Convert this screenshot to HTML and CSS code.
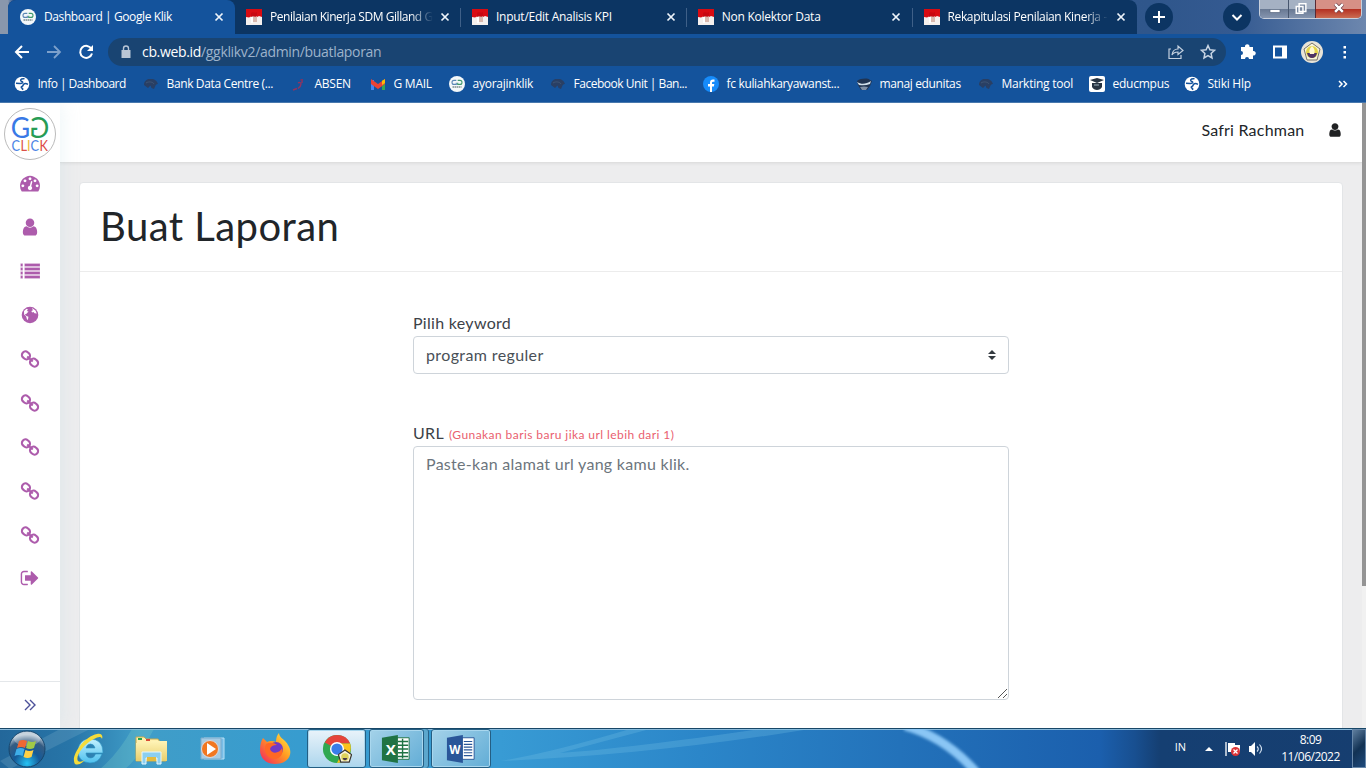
FILE: index.html
```html
<!DOCTYPE html>
<html lang="id">
<head>
<meta charset="utf-8">
<title>Dashboard | Google Klik</title>
<link rel="stylesheet" href="styles.css">
</head>
<body>
<svg class="defs" width="0" height="0">
  <defs>
    <symbol id="gg" viewBox="0 0 16 16"><circle cx="8" cy="8" r="8" fill="#f4f8fa"/><path d="M7.300 4.400H5a2 2 0 0 0 0 4h2.300V6.700" fill="none" stroke="#5b86b5" stroke-width="1.100"/><path d="M8.700 4.400H11a2 2 0 0 1 0 4H8.700V6.700" fill="none" stroke="#3f9a6c" stroke-width="1.100"/><path d="M3.500 11h9" stroke="#99a6a8" stroke-width="2" stroke-dasharray="1.500 .5"/></symbol>
    <symbol id="flag" viewBox="0 0 16 16"><path d="M0 0h16v16H0z" fill="#f5f0ee"/><path d="M0 0h16v8l-3-1-3 1.500L6 7 3 8.500 0 8z" fill="#d90b12"/><path d="M5 5h6v8H5z" fill="#d8b8ae"/><path d="M5 4c2-2 4 1 6-1v4c-2 2-4-1-6 1z" fill="#c80710"/><path d="M5 8h2v6H5z" fill="#fff"/></symbol>
    <symbol id="close" viewBox="0 0 16 16"><path d="M4.500 4.500l7 7m0-7l-7 7" stroke="#eef4fb" stroke-width="1.700"/></symbol>
    <symbol id="world" viewBox="0 0 16 16"><circle cx="8" cy="8" r="7.300" fill="#fff"/><path d="M10.500 2.800c-2.500-.3-4 .3-3.800 1.700.2 1.200 2.300.7 2 2-.3 1-1.700 1-2.700.9L2 7.300" fill="none" stroke="#14539c" stroke-width="1.500"/><path d="M14 8.400c-1.500-1-3.300-1.200-4.300-.3-.9.900-.3 1.800-1.500 2.200-1.500.4-1 1.700 0 1.900.8.200.4 1 .2 1.800" fill="none" stroke="#14539c" stroke-width="1.500"/></symbol>
    <symbol id="bird" viewBox="0 0 16 16"><path d="M1 9C1 4 5 2.500 8 3c4 0 6 2 7 5-1 0-2 .5-2.500 1.500L11 13 8.500 12 7.500 9.500 5 12z" fill="#293f64"/><path d="M3 7c3-2 7-1 8 1" stroke="#405676" fill="none"/></symbol>
    <symbol id="user" viewBox="0 0 1792 1792"><path d="M1536 1399q0 109-62.500 187t-150.500 78h-854q-88 0-150.500-78t-62.500-187q0-85 8.500-160.500t31.500-152 58.500-131 94-89 134.500-34.500q131 128 313 128t313-128q76 0 134.500 34.500t94 89 58.500 131 31.500 152 8.500 160.500zm-256-887q0 159-112.500 271.500t-271.500 112.500-271.500-112.500-112.500-271.500 112.500-271.500 271.500-112.500 271.500 112.500 112.500 271.500z"/></symbol>
    <symbol id="link" viewBox="0 0 20 20"><g fill="none" stroke="currentColor" stroke-width="2.100" transform="rotate(42 10 10)"><rect x=".4" y="6.500" width="8.300" height="7" rx="3.300"/><rect x="11.300" y="6.500" width="8.300" height="7" rx="3.300"/><path d="M6.300 10h7.400"/></g></symbol>
    <radialGradient id="orb" cx=".5" cy=".9" r=".8"><stop offset="0" stop-color="#25c3f4"/><stop offset=".45" stop-color="#155a98"/><stop offset=".8" stop-color="#355c82"/><stop offset="1" stop-color="#b1c3d2"/></radialGradient>
    <linearGradient id="ie" x2="0" y2="1"><stop stop-color="#c4f1ff"/><stop offset="1" stop-color="#4cc0ee"/></linearGradient>
    <linearGradient id="fox" x1="1" y1="0" x2="0" y2="1"><stop stop-color="#fff04b"/><stop offset=".45" stop-color="#ff9a22"/><stop offset="1" stop-color="#f31c63"/></linearGradient>
    <linearGradient id="sheet" x2="0" y2="1"><stop stop-color="#fff4b7"/><stop offset="1" stop-color="#e9ce6c"/></linearGradient>
  </defs>
</svg>

<div class="screen">
  <header class="browser">
    <div class="tabstrip">
      <div class="tabs">
        <div class="tab active"><svg class="fav"><use href="#gg"/></svg><span class="tab-name">Dashboard | Google Klik</span><svg class="fav"><use href="#close"/></svg></div>
        <div class="tab fade t2"><svg class="fav"><use href="#flag"/></svg><span class="tab-name">Penilaian Kinerja SDM Gilland G</span><svg class="fav"><use href="#close"/></svg></div>
        <div class="tab t3"><svg class="fav"><use href="#flag"/></svg><span class="tab-name">Input/Edit Analisis KPI</span><svg class="fav"><use href="#close"/></svg></div>
        <div class="tab t4"><svg class="fav"><use href="#flag"/></svg><span class="tab-name">Non Kolektor Data</span><svg class="fav"><use href="#close"/></svg></div>
        <div class="tab fade t5"><svg class="fav"><use href="#flag"/></svg><span class="tab-name">Rekapitulasi Penilaian Kinerja -</span><svg class="fav"><use href="#close"/></svg></div>
      </div>
      <svg class="round plus" viewBox="0 0 28 28"><path d="M14 8v12M8 14h12" stroke="#fff" stroke-width="2"/></svg>
      <svg class="round down" viewBox="0 0 28 28"><path d="M9.500 12l4.500 4.500 4.500-4.500" fill="none" stroke="#fff" stroke-width="2"/></svg>
      <div class="winbuttons">
        <svg class="min" viewBox="0 0 28 18"><path d="M10 9.500h10v3H10z" fill="#fff" stroke="#57677f" stroke-width=".7"/></svg>
        <svg class="max" viewBox="0 0 27 18"><path d="M10.500 3.500h7v8h-7zM7.500 6.500h7v7h-7z" fill="#7888a1" stroke="#fff" stroke-width="1.500"/></svg>
        <svg class="exit" viewBox="0 0 47 18"><path d="M20 4l8 8m0-8l-8 8" stroke="#704048" stroke-width="4"/><path d="M20 4l8 8m0-8l-8 8" stroke="#fff" stroke-width="2.500"/></svg>
      </div>
    </div>
    <div class="toolbar">
      <svg class="tool" viewBox="0 0 20 20"><path d="M17 10H4m6-6l-6 6 6 6" fill="none" stroke="#fff" stroke-width="2"/></svg>
      <svg class="tool" viewBox="0 0 20 20"><path d="M3 10h13m-6-6l6 6-6 6" fill="none" stroke="#7da0cb" stroke-width="1.800"/></svg>
      <svg class="tool" viewBox="0 0 20 20"><path d="M15.500 7A6 6 0 1 0 16 11.500" fill="none" stroke="#fff" stroke-width="2"/><path d="M17 3v6h-6z" fill="#fff"/></svg>
      <div class="omnibox">
        <svg class="lock" viewBox="0 0 12 16"><path d="M1.500 6h9v8h-9z" fill="#b9c6d6"/><path d="M3.500 7V4.500a2.500 2.500 0 0 1 5 0V7" fill="none" stroke="#b9c6d6" stroke-width="1.400"/></svg>
        <span class="url"><b>cb.web.id</b>/ggklikv2/admin/buatlaporan</span>
        <svg class="tool share" viewBox="0 0 20 20"><path d="M5 7H3v9.500h12V13M6 13c.5-4 3-6 6-6V4l5 4.500-5 4V10c-3 0-4.500.5-6 3z" fill="none" stroke="#c3d0df" stroke-width="1.200"/></svg>
        <svg class="tool" viewBox="0 0 20 20"><path d="M10 3.500l1.900 4.300 4.600.5-3.400 3.100.9 4.600-4-2.300L6 16l.9-4.600-3.400-3.100 4.600-.5z" fill="none" stroke="#c8d5e4" stroke-width="1.500"/></svg>
      </div>
      <svg class="tool ext" viewBox="0 0 20 20"><path d="M3 5h4a2.300 2.300 0 1 1 4.500 0H15v4a2.300 2.300 0 1 1 0 4.500V17h-4a2 2 0 1 0-4 0H3v-4a2 2 0 1 0 0-4z" fill="#fff"/></svg>
      <svg class="tool panel" viewBox="0 0 20 20"><path d="M4 4.500h12v11H4z" fill="none" stroke="#fff" stroke-width="2"/><path d="M12 4h5v12h-5z" fill="#fff"/></svg>
      <svg class="avatar" viewBox="0 0 22 22"><circle cx="11" cy="11" r="11" fill="#e9e4d8"/><path d="M11 2l8 6-3 11H6L3 8z" fill="#f8f4d7" stroke="#77736c"/><circle cx="11" cy="11" r="6" fill="#e5d449"/><path d="M6 12h10q-1 5-5 5t-5-5z" fill="#4e3265"/><path d="M11 5q4 4 2 8H9q-2-4 2-8z" fill="#fff8d0"/></svg>
      <svg class="tool dots" viewBox="0 0 20 20"><path d="M8.500 4H11v2.500H8.500zm0 5H11v2.500H8.500zm0 5H11v2.500H8.500z" fill="#fff"/></svg>
    </div>
    <nav class="bookmarks">
      <span class="bm b1"><svg class="fav"><use href="#world"/></svg>Info | Dashboard</span>
      <span class="bm b2"><svg class="fav"><use href="#bird"/></svg>Bank Data Centre (...</span>
      <span class="bm b3"><svg class="fav" viewBox="0 0 16 16"><path d="M7 7c1.500-1 3-.5 3 1s-1 3-3 4.500M11 3v4M2 14l4-1.500" fill="none" stroke="#93345f" stroke-width="1.400"/><path d="M9 4h3" stroke="#7f315e"/></svg>ABSEN</span>
      <span class="bm b4"><svg class="fav" viewBox="0 0 16 16"><path d="M1 4h3v10H1z" fill="#4285f4"/><path d="M12 4h3v10h-3z" fill="#34a853"/><path d="M1 3l7 5 7-5v5l-7 5-7-5z" fill="#ea4335"/><path d="M12 5l3-2v4l-3 2z" fill="#fbbc04"/></svg>G MAIL</span>
      <span class="bm b5"><svg class="fav"><use href="#gg"/></svg>ayorajinklik</span>
      <span class="bm b6"><svg class="fav"><use href="#bird"/></svg>Facebook Unit | Ban...</span>
      <span class="bm b7"><svg class="fav" viewBox="0 0 16 16"><circle cx="8" cy="8" r="8" fill="#168bfa"/><path d="M7 16v-5.500H5V8h2V6.500Q7 3.500 10 3.500h1.500v2.200H10q-1 0-1 1V8h2.300l-.4 2.500H9V16z" fill="#fff"/></svg>fc kuliahkaryawanst...</span>
      <span class="bm b8"><svg class="fav" viewBox="0 0 16 16"><path d="M1 5c4-3 11-3 13-1l2 1-2 5-3 4H5L2 9z" fill="#203452"/><path d="M1 6c5 3 9 2 14-1l-1 3q-5 2-11 1z" fill="#d0dfeb"/><path d="M4 11q4-1 8 0l-2 3H6z" fill="#7e8fa6"/></svg>manaj edunitas</span>
      <span class="bm b9"><svg class="fav"><use href="#bird"/></svg>Markting tool</span>
      <span class="bm b10"><svg class="fav" viewBox="0 0 16 16"><rect width="16" height="16" rx="2" fill="#fff"/><path d="M1 4l7-2 7 2-7 3zM3 7h10v4c-2 4-8 4-10 0z" fill="#263342"/><path d="M5 9h5" stroke="#a0b3bd"/></svg>educmpus</span>
      <span class="bm b11"><svg class="fav"><use href="#world"/></svg>Stiki Hlp</span>
      <span class="more"><svg viewBox="0 0 10 10"><path d="M1 2l3 3-3 3M5.500 2l3 3-3 3" fill="none" stroke="#fff" stroke-width="1.500"/></svg></span>
    </nav>
  </header>

  <div class="page">
    <aside class="sidebar">
      <svg class="logo" viewBox="0 0 52 52"><circle cx="26" cy="26" r="25.500" fill="#fff" stroke="#bbb"/>
        <g class="mono"><text transform="translate(6.800 29.700) scale(.95 1)" fill="#3979e6">G</text><text transform="translate(45.200 29.700) scale(-.95 1)" fill="#279c55">G</text></g>
        <g class="click"><text transform="translate(7.500 42.700) scale(.88 1)" fill="#4c83e5">C</text><text transform="translate(16.500 42.700) scale(.88 1)" fill="#db5049">L</text><text transform="translate(23 42.700) scale(.88 1)" fill="#ecba35">I</text><text transform="translate(26.500 42.700) scale(.88 1)" fill="#4c83e5">C</text><text transform="translate(35.500 42.700) scale(.88 1)" fill="#dc4a45">K</text></g></svg>
      <ul class="menu">
        <li><svg viewBox="0 0 1792 1792"><path d="M384 1152q0-53-37.500-90.500t-90.500-37.500-90.500 37.500-37.500 90.500 37.500 90.500 90.500 37.500 90.500-37.500 37.500-90.500zm192-448q0-53-37.500-90.500t-90.500-37.500-90.500 37.500-37.500 90.500 37.500 90.500 90.500 37.500 90.500-37.500 37.500-90.500zm428 481l101-382q6-26-7.500-48.500t-38.500-29.500-48 6.500-30 39.500l-101 382q-60 5-107 43.500t-63 98.500q-20 77 20 146t117 89 146-20 89-117q16-60-6-117t-72-91zm660-33q0-53-37.500-90.500t-90.500-37.500-90.500 37.500-37.500 90.500 37.500 90.500 90.500 37.500 90.500-37.500 37.500-90.500zm-640-640q0-53-37.500-90.500t-90.500-37.500-90.500 37.500-37.500 90.500 37.500 90.500 90.500 37.500 90.500-37.500 37.500-90.500zm448 192q0-53-37.500-90.500t-90.500-37.500-90.500 37.500-37.500 90.500 37.500 90.500 90.500 37.500 90.500-37.500 37.500-90.500zm320 448q0 261-141 483-19 29-54 29h-1402q-35 0-54-29-141-221-141-483 0-182 71-348t191-286 286-191 348-71 348 71 286 191 191 286 71 348z"/></svg></li>
        <li><svg><use href="#user"/></svg></li>
        <li><svg viewBox="0 0 20 20"><path d="M.5 2.500h2.300v3H.5zm4 0H20v3H4.500zm-4 4h2.300v3H.5zm4 0H20v3H4.500zm-4 4h2.300v3H.5zm4 0H20v3H4.500zm-4 4h2.300v3H.5zm4 0H20v3H4.500z" stroke="#fff" stroke-width=".2"/></svg></li>
        <li><svg viewBox="0 0 20 20"><circle cx="10" cy="10" r="8.300"/><path d="M4 6l2.500-2.300L8 4.500 6.800 6l1.700.4-2 2.400-1.700.7 1.300 1.300 2.300 1-.5 3.200-1-.8-.7-2.600-2.100-2zM12 3l3.500 2.500 1.300 3-2.300-.2-1-1.300-1.500.5-.6-1.500 1.500-.7z" fill="#fff"/></svg></li>
        <li><svg><use href="#link"/></svg></li><li><svg><use href="#link"/></svg></li><li><svg><use href="#link"/></svg></li><li><svg><use href="#link"/></svg></li><li><svg><use href="#link"/></svg></li>
        <li><svg viewBox="0 0 1792 1792"><path d="M704 1440q0 4 1 20t.5 26.500-3 23.500-10 19.500-20.500 6.500h-320q-119 0-203.500-84.500t-84.500-203.500v-704q0-119 84.500-203.500t203.500-84.500h320q13 0 22.500 9.500t9.500 22.500q0 4 1 20t.5 26.500-3 23.500-10 19.500-20.500 6.500h-320q-66 0-113 47t-47 113v704q0 66 47 113t113 47h312l11.500 1 11.500 3 8 5.500 7 9 2 13.500zm928-544q0 26-19 45l-544 544q-19 19-45 19t-45-19-19-45v-288h-448q-26 0-45-19t-19-45v-384q0-26 19-45t45-19h448v-288q0-26 19-45t45-19 45 19l544 544q19 19 19 45z"/></svg></li>
      </ul>
      <div class="expand"><svg viewBox="0 0 12 12"><path d="M1 1l5 5-5 5M6 1l5 5-5 5" fill="none" stroke="#4b5099" stroke-width="1.400"/></svg></div>
    </aside>
    <main class="content">
      <div class="topbar"><span class="username">Safri Rachman</span><svg class="usericon"><use href="#user"/></svg></div>
      <section class="card">
        <div class="card-head"><h1>Buat Laporan</h1></div>
        <form class="form">
          <label class="label-key">Pilih keyword</label>
          <div class="select"><span>program reguler</span><svg viewBox="0 0 8 10"><path d="M4 0l4 4H0zm0 10l4-4H0z" fill="#343a40"/></svg></div>
          <label class="label-url">URL <small>(Gunakan baris baru jika url lebih dari 1)</small></label>
          <div class="area"><span>Paste-kan alamat url yang kamu klik.</span><svg viewBox="0 0 9 9"><path d="M0 9l9-9M5 9l4-4" stroke="#555" stroke-width="1"/></svg></div>
        </form>
      </section>
    </main>
    <div class="scroll"><div class="thumb"></div></div>
  </div>

  <footer class="taskbar">
    <svg class="glow" viewBox="0 0 1366 40" preserveAspectRatio="none"><path d="M100 40q18-15 32-40h22q-16 30-29 40z" fill="#82d9cb" opacity=".25"/><path d="M0 32L60 0h30L10 40z" fill="#9cc5d9" opacity=".2"/><path d="M500 32q50-8 130-32h20q-60 16-90 24 70-5 200-24h50q-160 26-310 32z" fill="#76c1e5" opacity=".28"/><path class="streak" d="M905-3q40 11 71 46" fill="none" stroke="#8ac6f5" stroke-width="9"/></svg>
    <div class="launch">
      <svg class="start" viewBox="0 0 38 38"><circle cx="19" cy="19" r="18" fill="url(#orb)" stroke="#16466d"/><ellipse cx="19" cy="9" rx="13" ry="7" fill="#fff" opacity=".28"/><path d="M11 11q4-2 8 0l-2 7q-4-2-8 0z" fill="#ee6833"/><path d="M20 11q4 2 8 0l-2 7q-4 2-8 0z" fill="#a1c947"/><path d="M8.500 19q4-2 8 0l-2 7q-4-2-8 0z" fill="#3faee9"/><path d="M17.500 20q4 2 8 0l-2 7q-4 2-8 0z" fill="#ffd146"/></svg>
      <svg class="app ie" viewBox="0 0 32 32"><path d="M29 21q-3 9-12 9-12-1-12-12Q6 6 17 6q13 0 13 14H13q0 5 5 5 3 0 4.500-4zM13 15h9q-1-4-4.500-4T13 15z" fill="url(#ie)" stroke="#2a93c5" stroke-width=".6"/><path d="M2 31C-3 24 10 4 24 1c5-1 6 2 5 5-1-3-4-2-8 0C10 11 2 24 5 28q2 2 7-1-6 6-10 4z" fill="#f5dc3b"/></svg>
      <svg class="app files" viewBox="0 0 32 32"><path d="M1 4h8l2 2h12l2 3h6v19H1z" fill="#fff0af" stroke="#c7a94c"/><path d="M3 5h4v2H3z" fill="#28a54c"/><path d="M11 6h4v2h-4z" fill="#d94a35"/><path d="M19 8h4v2h-4z" fill="#3ea0e0"/><path d="M1 10h14l2-2h15v20H1z" fill="url(#sheet)"/><path d="M7 31V19h19v12h-4v-6H11v6z" fill="#8bcff0" stroke="#e4f6ff"/><path d="M12 24h9v4h-9z" fill="#e4bb3e"/></svg>
      <svg class="app wmp" viewBox="0 0 32 32"><path d="M8 5h20v21H8z" fill="#78bde7" stroke="#b7e1f7"/><path d="M5 5h20v21H5z" fill="#a5cbe4" stroke="#7caccc"/><circle cx="14" cy="16" r="8.500" fill="#f17721" stroke="#d9d9df"/><path d="M11 10l9 6-9 6z" fill="#fff"/></svg>
      <svg class="app firefox" viewBox="0 0 32 32"><path d="M16 31C7 31 1 25 1 17 1 12 2 8 4 5l4 4q4-2 9 0c0-4 1-7 3-9 0 5 7 7 9 12 6 9 0 19-13 19z" fill="url(#fox)"/><circle cx="17" cy="16" r="7" fill="#713bc7"/><path d="M7 11q6-3 11 1-6 0-7 4c2 6 10 4 12-1 2 6-2 11-8 11-7-1-11-8-8-15z" fill="#ff6825"/></svg>
    </div>
    <div class="task chrome"><svg class="app" viewBox="0 0 32 32"><circle cx="16" cy="16" r="15" fill="#30a851"/><path d="M16 16L3 9Q7 1 16 1q10 0 14 9H16z" fill="#e5443a"/><path d="M16 10h14c3 10-4 21-14 21l6-12z" fill="#fbc31c"/><circle cx="16" cy="16" r="7.500" fill="#fff"/><circle cx="16" cy="16" r="6" fill="#397de8"/><path d="M24.500 17l7 5-2.500 8h-9l-2.500-8z" fill="#f8f3d6" stroke="#393631" stroke-width="1.300"/><circle cx="24.500" cy="24.500" r="4" fill="#ded25b"/><path d="M22 25.500h5q-.5 2.500-2.500 2.500T22 25.500z" fill="#493a47"/></svg></div>
    <div class="task excel"><svg class="app" viewBox="0 0 32 32"><path d="M17 4h13v23H17z" fill="#fff" stroke="#207344"/><path d="M18 8h11M18 12h11M18 16h11M18 20h11M18 24h11M23 5v21" stroke="#207344" stroke-width="1.500"/><path d="M1 4l17-3v30L1 28z" fill="#207344"/><text x="5" y="22" font-family="Open Sans" font-weight="700" font-size="16" fill="#fff">X</text></svg></div>
    <div class="task word"><svg class="app" viewBox="0 0 32 32"><path d="M17 4h13v23H17z" fill="#fff" stroke="#2a5699"/><path d="M19 8h9M19 11h9M19 14h9M19 17h9M19 20h9M19 23h9" stroke="#2a5699" stroke-width="1.300"/><path d="M1 4l17-3v30L1 28z" fill="#2a5699"/><text x="3.500" y="21" font-family="Open Sans" font-weight="700" font-size="14" fill="#fff" textLength="12" lengthAdjust="spacingAndGlyphs">W</text></svg></div>
    <div class="tray">
      <span class="lang">IN</span>
      <svg class="up" viewBox="0 0 8 4"><path d="M0 4l4-4 4 4z" fill="#fff"/></svg>
      <svg class="tray-flag" viewBox="0 0 16 16"><path d="M1 1v14" stroke="#fff" stroke-width="1.300"/><path d="M3 2h7v2h5v7H3z" fill="#fff"/><circle cx="10.500" cy="10.500" r="4.500" fill="#dd3437"/><path d="M8.500 8.500l4 4m0-4l-4 4" stroke="#fff" stroke-width="1.300"/></svg>
      <svg class="sound" viewBox="0 0 16 16"><path d="M1 5h2l4-4v14l-4-4H1z" fill="#fff"/><path d="M9 5.500q2.500 2.500 0 5M11.500 3.500q4 4.500 0 9" fill="none" stroke="#d9e7f5" stroke-width="1.100"/></svg>
      <div class="clock"><span>8:09</span><span class="date">11/06/2022</span></div>
      <span class="peek"></span>
    </div>
  </footer>
</div>
</body>
</html>
```
FILE: styles.css
```css
* { box-sizing: border-box; }
body { margin: 0; overflow: hidden; font-family: Lato, "Open Sans", sans-serif; }
svg { display: block; flex: none; }
.defs { position: absolute; }
.screen { display: flex; flex-direction: column; width: 1366px; height: 768px; overflow: hidden; }

.browser { height: 103px; flex: none; background: #14539c; border-bottom: 1px solid #4878ad; font: 12px/16px "Open Sans", sans-serif; color: #fff; }
.tabstrip { display: flex; height: 34px; background: linear-gradient(90deg, #8997ac 0, #8997ac 8px, #3f649a 12px, #2f568b 1150px, #345a91 1235px, #6d87ae 1366px); }
.tabs { display: flex; width: 1129px; margin-left: 8px; background: #0c3563; border-radius: 8px 8px 0 0; }
.tab { display: flex; align-items: center; width: 225.750px; flex: none; padding: 0 7px 0 12px; height: 34px; }
.tab.active { background: #14539c; border-radius: 8px 8px 0 0; width: 227px; padding-right: 8px; }
.tab.t2 { width: 225px; padding-left: 11px; }
.tab.t3, .tab.t4, .tab.t5 { background: linear-gradient(#3f6088, #3f6088) 0 8px / 1px 19px no-repeat; }
.tab.t4, .tab.t5 { padding-right: 8px; }
.tab-name { flex: 1; margin: 0 5px 0 8px; overflow: hidden; white-space: nowrap; letter-spacing: -.26px; }
.active .tab-name { letter-spacing: -.4px; }
.t2 .tab-name { letter-spacing: -.45px; margin-right: 4px; }
.t5 .tab-name { letter-spacing: -.36px; }
.fade .tab-name { -webkit-mask-image: linear-gradient(90deg, #000 86%, transparent); mask-image: linear-gradient(90deg, #000 86%, transparent); }
.fav { width: 16px; height: 16px; }
.round { width: 28px; height: 28px; border-radius: 14px; background: #0c3563; margin-top: 3px; }
.plus { margin-left: 8px; }
.down { margin-left: 50px; }
.winbuttons { display: flex; width: 103px; height: 19px; margin-left: 8px; border: 1px solid #c9d0dc; border-top: 0; border-radius: 0 0 5px 5px; overflow: hidden; }
.winbuttons svg { height: 18px; }
.min { width: 28px; background: linear-gradient(#a5b1c3 50%, #687892 50%, #8595af); }
.max { width: 27px; border-left: 1px solid #47566e; background: linear-gradient(#a5b1c3 50%, #687892 50%, #8595af); }
.exit { width: 46px; border-left: 1px solid #582a34; background: linear-gradient(#d69086 50%, #b32f21 50%, #cb6c52); }
.toolbar { display: flex; align-items: center; height: 36px; padding-left: 12px; }
.tool { width: 20px; height: 20px; margin-right: 12px; }
.omnibox { display: flex; align-items: center; width: 1118px; height: 28px; border-radius: 14px; background: #194472; padding-left: 12px; margin-right: 12px; }
.omnibox .tool { margin-right: 8px; }
.omnibox .share { margin-right: 12px; }
.tool.panel { margin-right: 11px; }
.lock { width: 12px; height: 16px; margin-right: 10px; }
.url { flex: 1; color: #9db3cb; font-size: 14px; letter-spacing: -.33px; }
.url b { color: #fff; font-weight: 400; }
.avatar { width: 22px; height: 22px; margin-right: 12px; }
.dots { margin-right: 0; }
.bookmarks { display: grid; grid-template-columns: 129px 148px 79px 79px 101px 153px 153px 122px 111px 95px 154px 12px; align-items: center; height: 28px; padding-left: 14px; }
.bm { display: flex; align-items: center; gap: 7.500px; white-space: nowrap; letter-spacing: -.25px; }
.b1 { letter-spacing: -.53px; }
.b2, .b8 { letter-spacing: -.37px; }
.b6 { letter-spacing: -.48px; }
.b7 { letter-spacing: -.33px; }
.more svg { width: 10px; height: 10px; }

.page { display: flex; height: 625px; flex: none; overflow: hidden; background: #ededee; }
.sidebar { display: flex; flex-direction: column; width: 60px; flex: none; background: #fff; box-shadow: 0 0 20px rgba(170,210,225,.25); z-index: 1; }
.logo { width: 52px; height: 52px; margin: 5px 4px 2px; }
.mono { font: 28px Lato, sans-serif; }
.click { font: 14.500px Lato, sans-serif; }
.menu { list-style: none; margin: 0; padding: 0; height: 521px; color: #ad5cac; fill: #ad5cac; }
.menu li { display: flex; justify-content: center; align-items: center; height: 43.900px; padding-bottom: 1px; }
.menu svg { width: 20px; height: 20px; }
.expand { display: flex; align-items: center; justify-content: center; height: 48px; margin-top: 3px; border-top: 1px solid #e4e7ea; }
.expand svg { width: 12px; height: 12px; }
.content { width: 1302px; }
.topbar { display: flex; align-items: center; justify-content: flex-end; height: 60px; padding: 0 20px 5px 0; background: #fff; border-bottom: 1px solid #dfdfdf; box-shadow: 0 1px 3px rgba(0,0,0,.06); color: #212529; font-size: 16px; }
.username { letter-spacing: .22px; padding-bottom: 1px; }
.usericon { width: 16px; height: 16px; margin: 0 -1px 0 22.500px; fill: #202123; }
.card { width: 1264px; height: 600px; margin: 19px 0 0 19px; background: #fff; border: 1px solid #e3e5e7; border-radius: 4px; }
.card-head { height: 89px; padding: 14px 20px; border-bottom: 1px solid #ececec; }
h1 { margin: 0; font-size: 40px; line-height: 58px; font-weight: 400; color: #212529; letter-spacing: .45px; }
.form { display: flex; flex-direction: column; width: 596px; margin: 40px 0 0 333px; font-size: 16px; line-height: 24px; color: #3c4248; letter-spacing: .3px; }
.label-key, .label-url { display: flex; align-items: baseline; height: 25px; margin-top: -1px; }
.select { display: flex; align-items: center; justify-content: space-between; height: 38px; padding: 0 12px 1px; border: 1px solid #ced4da; border-radius: 4px; color: #495057; margin-bottom: 48px; letter-spacing: .38px; }
.select svg { width: 8px; height: 10px; }
small { margin-left: 5px; font-size: 12px; color: #e9606f; letter-spacing: .43px; }
.area { display: flex; flex-direction: column; justify-content: space-between; height: 254px; padding: 5px 1px 1px 12px; border: 1px solid #ced4da; border-radius: 4px; color: #6c757d; letter-spacing: .28px; }
.area svg { width: 9px; height: 9px; align-self: flex-end; }
.scroll { width: 4px; background: #f1f1f1; }
.thumb { height: 483px; background: #949494; }

.taskbar { position: relative; display: flex; height: 40px; flex: none; border-top: 1px solid #184767; box-shadow: inset 0 1px #8abadb; background: linear-gradient(90deg, #23679a 0, #2775a8 70px, #409dc8 140px, #379ccf 300px, #389bd4 500px, #2b86c9 700px, #2372ba 900px, #1b5fad 1100px, #184f90 1135px, #153f72 1160px, #163e70 1366px); }
.glow { position: absolute; left: 0; top: 0; width: 1366px; height: 40px; }
.streak { filter: blur(1.500px); }
.launch, .task, .tray { position: relative; }
.launch { display: flex; align-items: center; width: 307px; }
.start { width: 38px; height: 38px; margin-left: 8px; }
.app { width: 32px; height: 32px; }
.ie { margin-left: 27px; }
.files { margin-left: 30px; }
.wmp { margin-left: 29px; }
.firefox { margin-left: 31px; }
.task { display: flex; align-items: center; justify-content: center; width: 59px; height: 39px; border: 1px solid #245e83; border-radius: 3px; box-shadow: inset 0 0 0 1px #a9d7ee; background: linear-gradient(135deg, #a4d2e9, #62add6); }
.task .app { width: 30px; height: 30px; }
.chrome { background: linear-gradient(#e9f3fa, #add6ed); }
.excel { width: 55px; margin-left: 3px; margin-right: 7px; padding-right: 2px; box-shadow: inset 0 0 0 1px #a9d7ee, 4px 0 #5ca7cd, 5px 0 #286389; }
.word { width: 60px; }
.tray { display: flex; align-items: center; margin-left: auto; color: #fff; font: 12px/16px "Open Sans", sans-serif; }
.lang { font-size: 11px; margin-right: 19px; padding-bottom: 4px; }
.up { width: 8px; height: 4px; margin-right: 12px; }
.tray-flag { width: 16px; height: 16px; margin-right: 7px; }
.sound { width: 16px; height: 16px; margin-right: 17px; }
.clock { display: flex; flex-direction: column; align-items: center; width: 59px; margin-right: 12px; letter-spacing: -.5px; }
.clock span { height: 16.500px; white-space: nowrap; }
.peek { width: 14px; height: 39px; border: 1px solid #6888aa; background: linear-gradient(135deg, #5f7e9e, #123254 50%, #1f4a7c); }
```
